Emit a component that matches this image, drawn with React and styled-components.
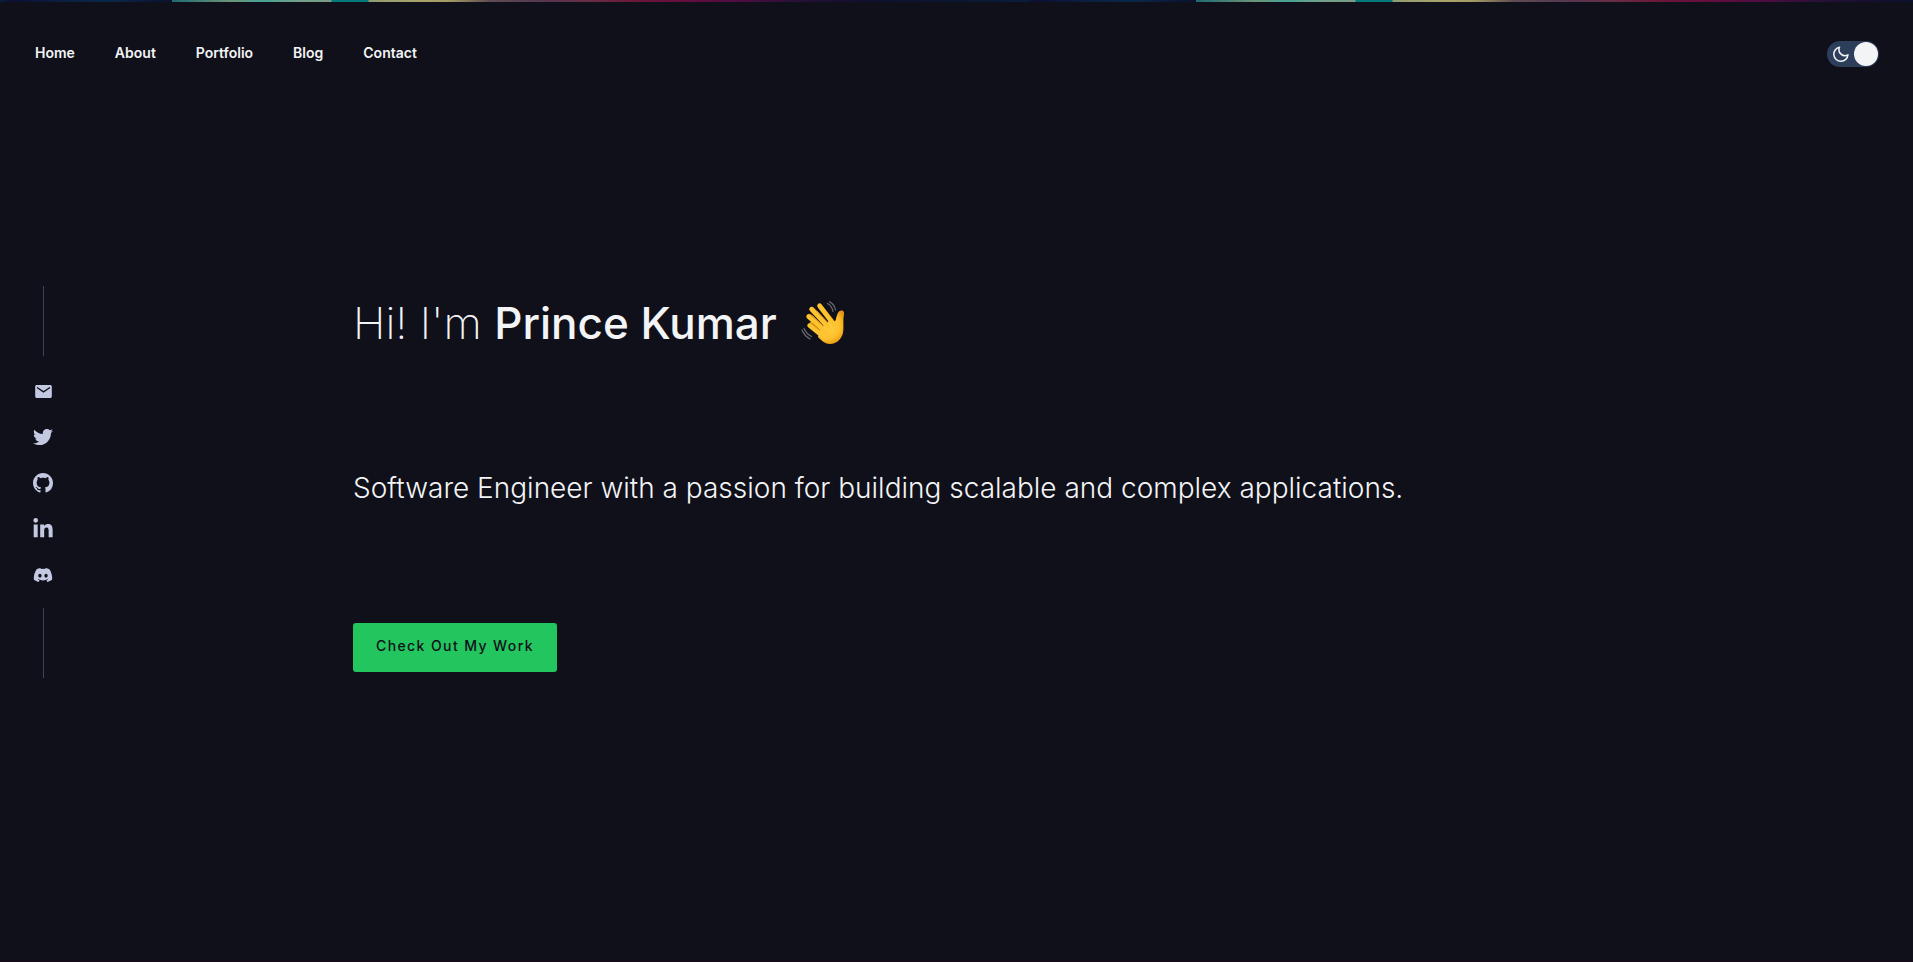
import React, { useState } from "react";
import styled, { createGlobalStyle } from "styled-components";
import { IoMdMail } from "react-icons/io";
import { FaTwitter, FaLinkedinIn, FaDiscord } from "react-icons/fa";
import { BsGithub } from "react-icons/bs";

const GlobalStyle = createGlobalStyle`
  *, *::before, *::after { box-sizing: border-box; }
  body {
    margin: 0;
    background: #10101a;
    color: #f3f4f6;
    font-family: Inter, "Liberation Sans", sans-serif;
  }
`;

const Page = styled.div`
  min-height: 100vh;
  display: flex;
  flex-direction: column;
  border-bottom: 2px solid #150c1a;
`;

const Ribbon = styled.div`
  height: 2px;
  background: repeating-linear-gradient(
    90deg,
    #0a1e3c 0, #0c1032 12px, #0b1e40 60px, #082848 110px, #0c1c3c 140px, #0c1030 172px,
    #1f6c70 172px, #6b9478 230px, #45a394 262px, #76a088 300px, #789c88 331px,
    #007c7c 332px, #007c7c 368px,
    #8f9c74 369px, #aca468 425px, #a09a62 450px, #604c50 490px, #543850 540px,
    #6a2c44 590px, #6c1438 640px, #640c40 690px, #500c44 740px, #2a1038 790px,
    #101030 860px, #0a1632 950px, #0a1e3c 1024px
  );
`;

const Header = styled.header`
  display: flex;
  align-items: center;
  justify-content: space-between;
  padding: 39px 34px 0 35px;
`;

const Nav = styled.nav`
  display: flex;
  gap: 40px;
  padding-bottom: 2px;
`;

const NavLink = styled.a`
  color: inherit;
  font-size: 14px;
  font-weight: 600;
  line-height: 20px;
  text-decoration: none;
`;

const Switch = styled.label`
  display: flex;
  align-items: center;
  width: 52px;
  height: 26px;
  padding: 1px;
  border-radius: 13px;
  background: #2c3e5a;
  cursor: pointer;
  flex-direction: ${(p) => (p.$dark ? "row" : "row-reverse")};
`;

const SwitchInput = styled.input`
  appearance: none;
  flex: none;
  order: 1;
  width: 24px;
  height: 24px;
  margin: 0;
  border-radius: 50%;
  background: #f3f4f6;
  cursor: inherit;
`;

const SwitchIcon = styled.svg`
  flex: 1;
  height: 16px;
`;

const Main = styled.main`
  flex: 1;
  display: flex;
  align-items: flex-start;
  padding: 219px 32px 40px;
`;

const Social = styled.aside`
  display: flex;
  flex-direction: column;
  align-items: center;
  gap: 23px;
  width: 22px;
`;

const SocialList = styled.nav`
  display: flex;
  flex-direction: column;
  align-items: center;
  gap: 26px;
  padding-top: 2px;
`;

const Rule = styled.span`
  width: 1px;
  height: 70px;
  background: #38455a;
`;

const SocialLink = styled.a`
  display: flex;
  align-items: center;
  height: 20px;
  color: #c4c9e2;
  font-size: ${(p) => p.$size}px;
`;

const Intro = styled.section`
  flex: 1;
  display: flex;
  flex-direction: column;
  align-items: flex-start;
  gap: 116px;
  padding-top: 7px;
  margin-left: 299px;
`;

const Title = styled.h1`
  display: flex;
  align-items: center;
  gap: 24px;
  margin: 0;
  font-size: 44px;
  font-weight: 200;
  line-height: 60px;
`;

const Name = styled.strong`
  font-weight: 500;
`;

const Lead = styled.p`
  margin: 0;
  font-size: 28px;
  font-weight: 300;
  line-height: 38px;
`;

const WorkButton = styled.button`
  padding: 12px 23px 16px;
  border: 0;
  border-radius: 3px;
  background: #22c55e;
  color: #10101a;
  font: 500 14px/21px Inter, "Liberation Sans", sans-serif;
  letter-spacing: 0.1em;
  cursor: pointer;
`;

const links = ["Home", "About", "Portfolio", "Blog", "Contact"];

const socials = [
  ["Email", IoMdMail, 19],
  ["Twitter", FaTwitter, 20],
  ["GitHub", BsGithub, 20],
  ["LinkedIn", FaLinkedinIn, 22],
  ["Discord", FaDiscord, 20],
];

function WavingHand() {
  return (
    <svg width="44" height="44" viewBox="0 0 44 44" role="img" aria-label="Waving hand">
      <defs>
        <radialGradient id="palm" cx="26" cy="25" r="20" gradientUnits="userSpaceOnUse">
          <stop offset="0" stopColor="#ffd348" />
          <stop offset="0.65" stopColor="#fdc02b" />
          <stop offset="1" stopColor="#e79410" />
        </radialGradient>
      </defs>
      <g fill="none" stroke="#dd930d" strokeLinecap="round" strokeWidth="5">
        <path d="M10.5 23.5 23 35M8.5 15.5 25 30M11 8.5 27 25M19 5.5 32 22" />
      </g>
      <path
        fill="url(#palm)"
        d="M29 19C31 22 34 22 35 18C36 14 37 9 41 9.500C44 10 43 14 42.500 17C42 21 43 27 42 32C40 39 35 43 29 43C24 43 21 40 17 36L19 28Z"
      />
      <g fill="none" stroke="#fdc431" strokeLinecap="round" strokeWidth="4.400">
        <path d="M8.500 24.500 24 37M7.500 15.500 26 32M10.500 8 28 27M18.500 4.500 33 24" />
      </g>
      <g fill="none" stroke="#dd930d" strokeWidth="0.900" strokeLinecap="round">
        <path d="M12 22.500 19 29M11.500 14.500 22 25M16 10 27 22" />
      </g>
      <g fill="none" stroke="#6e6e74" strokeWidth="1.200" strokeLinecap="round">
        <path d="M26.500 2.500Q31 5 32 10.500M28.500.800Q33.500 3.500 34.500 9M1 29Q3.500 35 9 38M3 27.500Q5.500 33 10.500 35.500" />
      </g>
    </svg>
  );
}

export default function App() {
  const [dark, setDark] = useState(true);
  return (
    <Page>
      <GlobalStyle />
      <Ribbon />
      <Header>
        <Nav aria-label="Main">
          {links.map((name) => (
            <NavLink key={name} href={`#${name.toLowerCase()}`}>{name}</NavLink>
          ))}
        </Nav>
        <Switch $dark={dark}>
          <SwitchInput
            type="checkbox"
            role="switch"
            aria-label="Dark mode"
            checked={dark}
            onChange={(e) => setDark(e.target.checked)}
          />
          <SwitchIcon viewBox="0 0 16 16" aria-hidden="true">
            <path
              d="M6.500 1.200A7.100 7.100 0 1 0 15 8.800A6 6 0 0 1 6.500 1.200Z"
              fill="none"
              stroke="#f3f4f6"
              strokeWidth="1.500"
              strokeLinejoin="round"
            />
          </SwitchIcon>
        </Switch>
      </Header>
      <Main>
        <Social>
          <Rule />
          <SocialList aria-label="Social links">
            {socials.map(([label, Icon, size]) => (
              <SocialLink key={label} $size={size} href={`#${label.toLowerCase()}`} aria-label={label}>
                <Icon />
              </SocialLink>
            ))}
          </SocialList>
          <Rule />
        </Social>
        <Intro>
          <Title>
            <span>Hi! I'm <Name>Prince Kumar</Name></span>
            <WavingHand />
          </Title>
          <Lead>Software Engineer with a passion for building scalable and complex applications.</Lead>
          <WorkButton type="button">Check Out My Work</WorkButton>
        </Intro>
      </Main>
    </Page>
  );
}
